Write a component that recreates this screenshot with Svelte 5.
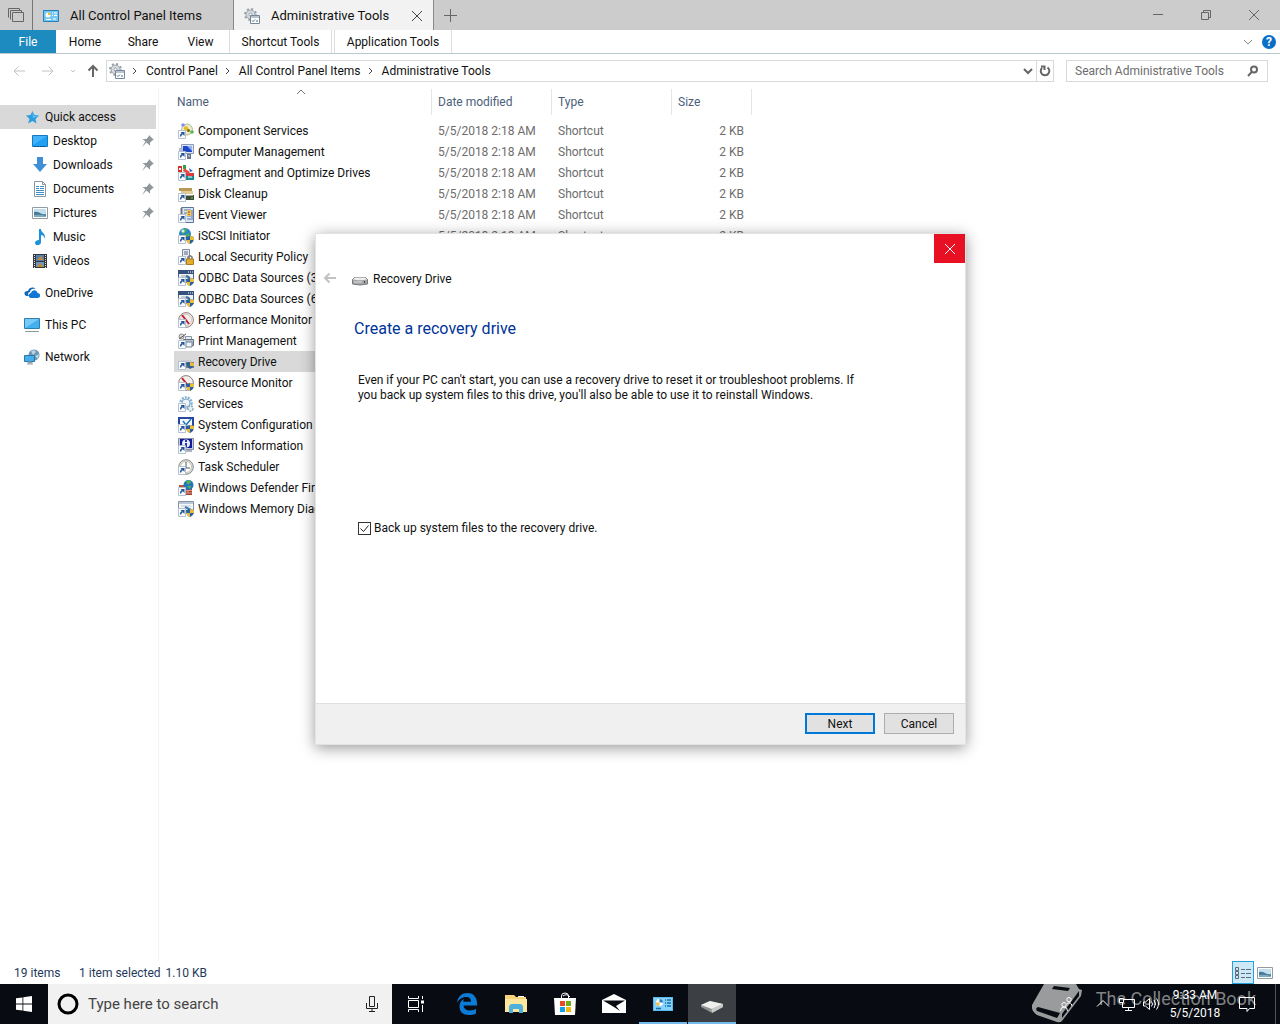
<script>
  let backup = $state(true);
  let selected = $state('Recovery Drive');

  // overlays shared by the shortcut icons
  const arrow =
    '<path d="M.5 7.5h7v8h-7z" fill="#fff" stroke="#b4c1d0"/><path d="M2.500 13.500q0-2 2-3" fill="none" stroke="#24539c" stroke-width="1.5"/><path d="M2.500 9H6.500v4z" fill="#24539c"/>';
  const shield =
    '<path d="M12 8l4 1c0 4-1 5.5-4 7-3-1.5-4-3-4-7z" fill="#2c5f9e"/><path d="M12 8l4 1v3h-4zM8 12h4v4q-3-1-4-4z" fill="#e8bd3c"/>';

  const icons = {
    component:
      '<circle cx="9" cy="6.5" r="5.5" fill="#e9ecc8" stroke="#b8bd92"/><circle cx="5" cy="2" r="1.8" fill="#8c8cf0"/><circle cx="8" cy="5.5" r="2.2" fill="#e8b828"/><circle cx="10.5" cy="7.5" r="1.5" fill="#7a6512"/><circle cx="14" cy="9" r="1.8" fill="#59b559"/>' + arrow,
    computer:
      '<path d="M3.5.5h12v9h-12z" fill="#dde4ef" stroke="#8b9bb8"/><path d="M5 2h9v6H5z" fill="#1d46c8"/><path d="M9 2h5v5z" fill="#8fb2f4"/><path d="M1 4h4v5H1z" fill="#aebbd0"/><path d="M9 10h4v5H9z" fill="#65758f"/><path d="M10 12h2" stroke="#dce4ef"/>' + arrow,
    defrag:
      '<path d="M0 1h4v6H0z" fill="#d92f2f"/><path d="M1 3h2v2H1z" fill="#fff"/><path d="M5 0h3v4H5z" fill="#28a050"/><path d="M6 3l6 4-2 2-5-3z" fill="#e34b3c"/><path d="M11 3l4 3-3 1z" fill="#3867c8"/><path d="M8 9h8v6H8z" fill="#1b8a91"/><path d="M8 8h8v3H8z" fill="#d93c40"/><path d="M10 12h4" stroke="#fff"/>' + arrow,
    cleanup:
      '<path d="M1 2h13v3H1z" fill="#b99a54"/><path d="M3 5h12v3H3z" fill="#e0cc94"/><path d="M7 9h9v5H7z" fill="#424a3c"/><path d="M8 9h7v1H8z" fill="#a5aa98"/><path d="M13 12h2" stroke="#5fe05f"/>' + arrow,
    event:
      '<path d="M3.5.5h12v15h-12z" fill="#dbe7f5" stroke="#5d7599"/><path d="M6 3h7M6 6h7M9 9h4M9 12h4" stroke="#4b72b5"/><path d="M2 2h3M2 4h3M2 6h3" stroke="#777"/><path d="M9 3h4v6H9z" fill="#f4c63a"/><path d="M11 4v2M11 7v1" stroke="#b03020"/><path d="M13 3h2v10h-2z" fill="#9aabc3"/>' + arrow,
    iscsi:
      '<circle cx="7" cy="6" r="6" fill="#2b83c9"/><path d="M3 2q4-3 6 0l-2 3-3 1zM7 7l4-2 1 4-4 3z" fill="#52b04f"/><circle cx="5" cy="3" r="1.5" fill="#d7f0ff"/>' + arrow + shield,
    policy:
      '<path d="M4.5.5h7v10h-7z" fill="#e9edf2" stroke="#7a8ba1"/><path d="M6 3h4M6 5h4" stroke="#526780"/><path d="M10 10V8q2-2.5 4 0v2" fill="none" stroke="#777" stroke-width="1.5"/><path d="M8.5 10h7v5.5h-7z" fill="#e2ae32" stroke="#ae7b18"/>' + arrow,
    odbc:
      '<path d="M.5.5h15v12H.5z" fill="#eef2f6" stroke="#4c658b"/><path d="M0 0h16v4H0z" fill="#36517c"/><path d="M10 2h1M12 2h1M14 2h1" stroke="#fff"/><path d="M3 6h8" stroke="#9aa7b6"/><path d="M8 6l4 2" stroke="#3d6d9c" stroke-width="2"/>' + arrow + shield,
    perf:
      '<circle cx="8" cy="8" r="7.4" fill="#f2efeb" stroke="#8e7d7b"/><circle cx="8" cy="8" r="5.6" fill="none" stroke="#d9c7c5"/><path d="M4 3l7 9" stroke="#c41f2f" stroke-width="2"/>' + arrow,
    print:
      '<path d="M7.5 3.5h6v5h-6z" fill="#e8edf2" stroke="#8795a4"/><path d="M5.5 6.5h10v6h-10z" fill="#b7c0ca" stroke="#657485"/><path d="M8 9h6v5H8z" fill="#eef4fb" stroke="#718499"/><circle cx="3.5" cy="3.5" r="2.5" fill="#ddd" stroke="#888"/><path d="M1 6l7-5" stroke="#555"/>' + arrow,
    recovery:
      '<path d="M2 8l2-2h9l3 3v3H2z" fill="#c9ccd0"/>' + arrow + '<path d="M8 8h8v6H8z" fill="#777d82"/><path d="M12 8l4 1q0 4-4 6-3-2-4-6z" fill="#2c5f9e"/><path d="M12 8l4 1v3h-4z" fill="#e8bd3c"/>',
    resource:
      '<circle cx="8" cy="8" r="7.4" fill="#f2efeb" stroke="#8e7d7b"/><path d="M4 3l7 9" stroke="#c41f2f" stroke-width="2"/>' + arrow + shield,
    services:
      '<circle cx="8" cy="7" r="5.5" fill="none" stroke="#86b3d4" stroke-width="2.5" stroke-dasharray="2 1"/><circle cx="8" cy="7" r="4" fill="#edf5fa" stroke="#86a9c4"/><circle cx="12.5" cy="12.5" r="2.5" fill="#e8f0f7" stroke="#8ca6bb" stroke-width="1.5" stroke-dasharray="2 1"/>' + arrow,
    config:
      '<path d="M1 1h14v10H1z" fill="#f5faff" stroke="#2847a0" stroke-width="2"/><path d="M5 4l3 4 5-6" fill="none" stroke="#2377bd" stroke-width="1.5"/>' + arrow + shield,
    info:
      '<path d="M.5.5h15v11H.5z" fill="#c5cbdc" stroke="#8590a8"/><path d="M2 1h12v9H2z" fill="#101c98"/><circle cx="8" cy="5.5" r="4" fill="#e9edff"/><path d="M8 2v2M8 5v4" stroke="#2336b3" stroke-width="2"/><path d="M8 12h6v2H8z" fill="#aeb4c2"/>' + arrow,
    task:
      '<circle cx="8" cy="8" r="7.3" fill="#dfe2e4" stroke="#82898e"/><circle cx="8" cy="8" r="5.5" fill="#fff" stroke="#c9c3a2"/><path d="M8 3v6h4" fill="none" stroke="#475a6e"/>' + arrow,
    firewall:
      '<path d="M6 7h8v8H6z" fill="#a6402c"/><path d="M6 10.5h8M6 13h8M10 11v2" stroke="#dda08e"/><path d="M1 5h6v5H1z" fill="#bb5137"/><path d="M1 7.5h6" stroke="#dda08e"/><circle cx="10.5" cy="5" r="5" fill="#2376bd"/><path d="M8 1q4-2 5 1l-3 3zM9 6h4l-1 3z" fill="#56b64f"/>' + arrow,
    memory:
      '<path d="M.5.5h15v12H.5z" fill="#f4f7fa" stroke="#8794a7"/><path d="M1 1h14v2H1z" fill="#b9c7db"/><path d="M3 5h10" stroke="#bac4cf"/><path d="M7 6l6 3" stroke="#3b78b5" stroke-width="2"/>' + arrow + shield,
    star: '<path d="M8.5 2l2 4 4.5.5-3.500 3.500 1 4.500L8.500 12l-4.500 2.500L5.500 10 2 6.500l4.500-.5z" fill="#2d9de0"/><path d="M8.500 2L10 7l5-.5L9 9z" fill="#66c0f5"/>',
    desktop: '<path d="M.5 2.5h15v11H.5z" fill="#20a0f2" stroke="#147bc0"/><path d="M1 3h14L1 12z" fill="#42b3fb"/><path d="M2 13.5h12" stroke="#0b4f86" stroke-dasharray="2 1"/>',
    downloads: '<path d="M5 0h6v7h4l-7 8-7-8h4z" fill="#3f8fd6"/>',
    documents: '<path d="M2.5.5h8l3 3v12h-11z" fill="#fff" stroke="#8b959e"/><path d="M10.5.5v3h3" fill="none" stroke="#8b959e"/><path d="M4 5.5h3M4 7.5h3M8 5.5h4M8 7.5h4M4 9.5h8M4 11.5h8M4 13.5h8" stroke="#3f8fc9"/>',
    pictures: '<path d="M.5 2.5h15v11H.5z" fill="#fff" stroke="#939ba1"/><path d="M2 4h12v8H2z" fill="#c2dff0"/><path d="M2 7q3-1 6 1t6 1v3H2z" fill="#48799a"/><path d="M2 10q6-1 12 1v1H2z" fill="#7fa9bd"/>',
    music: '<path d="M7 0h2c0 4 5 4 4 10-1-3-2-4-4-4v7c0 4-6 4-6 1 0-2 2-3 4-3z" fill="#1b91dc"/>',
    videos: '<path d="M1 1h14v14H1z" fill="#34383e"/><path d="M2.5 2v13M13.5 2v13" stroke="#e2e2e2" stroke-dasharray="1 1"/><path d="M4 2h8v6H4z" fill="#547fae"/><path d="M4 9h8v5H4z" fill="#7294bd"/><path d="M5 7l4-4 3 4zM5 14l3-4 4 4z" fill="#bf8b39"/>',
    onedrive: '<path d="M5 11H3C-1 10 0 5.5 4 6c1-4 6-4.5 7.5-2C8 3 6 5 6 7 4 7 3.5 9.5 5 11z" fill="#1266b5"/><path d="M7 13c-3 0-3-4.5 0-5 1-4 6-3.5 6.5 0 3.5 0 3.5 5 0 5z" fill="#0f78d4"/>',
    pc: '<path d="M.5 1.5h15v10H.5z" fill="#42b0ed" stroke="#327eab"/><path d="M1 2h14L1 11z" fill="#76caf7"/><path d="M1 14.5h14" stroke="#929da6"/>',
    network: '<circle cx="10" cy="6" r="5.5" fill="#6f95b0"/><path d="M7 2q4-2 5 1l-3 3zM11 7l4-2-1 5z" fill="#b8d3e3"/><path d="M.5 6.5h10v6H.5z" fill="#44adeb" stroke="#2c75a6"/><path d="M4 13h4v1H4zM3 15h6" fill="#8ba0af" stroke="#8ba0af"/>',
    panel: '<path d="M.5 2.5h15v11H.5z" fill="#72c7f5" stroke="#2580b8"/><circle cx="5" cy="7" r="2.5" fill="#fff"/><path d="M5 4.5A2.5 2.5 0 0 1 7.5 7H5z" fill="#f1b936"/><path d="M9 5h1M11 5h3M9 7.5h1M11 7.5h3M3 11.5h5M10 11h3" stroke="#fff"/>',
    tools: '<circle cx="6.5" cy="6.5" r="5.5" fill="none" stroke="#98a1a9" stroke-width="2" stroke-dasharray="2 2.32"/><circle cx="6.5" cy="6.5" r="4.5" fill="#d5dade" stroke="#98a1a9"/><circle cx="6.5" cy="6.5" r="1.5" fill="#fff" stroke="#98a1a9"/><path d="M6.5 7.5h9v8h-9z" fill="#fff" stroke="#75879a"/><path d="M7 9h8" stroke="#75879a"/><path d="M8 12.5l1 1 2-2M12 13h2" fill="none" stroke="#4b6989"/>',
    drive: '<path d="M.5 8.5l2-2h11l2 2V13q-7.5 2-15 0z" fill="#a5a7a9" stroke="#77797b"/><path d="M1 8.5l2-2h10l2 2q-7 1.5-14 0z" fill="#eceded"/><path d="M2 11h8" stroke="#d9dadb"/><path d="M12.5 10v2" stroke="#444"/>',
    pin: '<path d="M9 2l5 5-1.5.3L10 9.800v3L6.500 9.500 2 14l3.500-5.500L2.500 6h3.800l2.400-2.500z" fill="#8f979d"/>'
  };

  const quickItems = [
    { name: 'Desktop', icon: 'desktop', pinned: true },
    { name: 'Downloads', icon: 'downloads', pinned: true },
    { name: 'Documents', icon: 'documents', pinned: true },
    { name: 'Pictures', icon: 'pictures', pinned: true },
    { name: 'Music', icon: 'music' },
    { name: 'Videos', icon: 'videos' }
  ];

  const places = [
    { name: 'OneDrive', icon: 'onedrive' },
    { name: 'This PC', icon: 'pc' },
    { name: 'Network', icon: 'network' }
  ];

  const crumbs = ['Control Panel', 'All Control Panel Items', 'Administrative Tools'];

  const files = [
    ['Component Services', 'component'],
    ['Computer Management', 'computer'],
    ['Defragment and Optimize Drives', 'defrag'],
    ['Disk Cleanup', 'cleanup'],
    ['Event Viewer', 'event'],
    ['iSCSI Initiator', 'iscsi'],
    ['Local Security Policy', 'policy'],
    ['ODBC Data Sources (32-bit)', 'odbc'],
    ['ODBC Data Sources (64-bit)', 'odbc'],
    ['Performance Monitor', 'perf'],
    ['Print Management', 'print'],
    ['Recovery Drive', 'recovery'],
    ['Resource Monitor', 'resource'],
    ['Services', 'services'],
    ['System Configuration', 'config'],
    ['System Information', 'info'],
    ['Task Scheduler', 'task'],
    ['Windows Defender Firewall', 'firewall'],
    ['Windows Memory Diagnostic', 'memory']
  ];
</script>

{#snippet icon(name)}
  <svg class="icon" width="16" height="16" viewBox="0 0 16 16" aria-hidden="true">{@html icons[name]}</svg>
{/snippet}

{#snippet stroke(d, w = 1, size = 16)}
  <svg class="icon" width={size} height={size} viewBox="0 0 {size} {size}" fill="none" stroke="currentColor" stroke-width={w} aria-hidden="true"><path {d} /></svg>
{/snippet}

<div class="desktop">
  <header class="tabbar">
    <button class="sets" aria-label="Previous tabs">{@render stroke('M.5 10.5v-9h11v2M2.5 12.5v-9h11v2M4.5 5.5h11v9h-11z')}</button>
    <button class="tab">{@render icon('panel')}<span>All Control Panel Items</span></button>
    <div class="tab active">
      {@render icon('tools')}<span>Administrative Tools</span>
      <button class="tab-close" aria-label="Close tab">{@render stroke('M3 3l10 10M13 3L3 13')}</button>
    </div>
    <button class="new-tab" aria-label="New tab">{@render stroke('M8.5 2v13M2 8.5h13')}</button>
    <div class="controls">
      <button aria-label="Minimize">{@render stroke('M3 7.5h10')}</button>
      <button aria-label="Restore">{@render stroke('M3.5 5.5h7v7h-7zM5.5 5.5v-2h7v7h-2')}</button>
      <button aria-label="Close">{@render stroke('M3 3l10 10M13 3L3 13')}</button>
    </div>
  </header>

  <nav class="ribbon">
    <button class="file">File</button>
    <button>Home</button>
    <button>Share</button>
    <button class="view">View</button>
    <button class="context">Shortcut Tools</button>
    <button class="context wide">Application Tools</button>
    <div class="ribbon-end">
      <button class="expand" aria-label="Expand the ribbon">{@render stroke('M4 6l4 4 4-4')}</button>
      <button class="help" aria-label="Help">?</button>
    </div>
  </nav>

  <div class="address-row">
    <div class="nav-buttons">
      <button class="dim" aria-label="Back">{@render stroke('M14 8H3M7.5 3.5L3 8l4.5 4.5')}</button>
      <button class="dim" aria-label="Forward">{@render stroke('M2 8h11M8.5 3.5L13 8l-4.5 4.5')}</button>
      <button class="dim" aria-label="Recent locations">{@render stroke('M2 3l2 2 2-2', 1, 8)}</button>
      <button class="up" aria-label="Up">{@render stroke('M8 14V3M3.5 7.5L8 3l4.5 4.5', 2)}</button>
    </div>
    <div class="address">
      {@render icon('tools')}
      {#each crumbs as crumb}
        <span class="chevron">{@render stroke('M2 1l3 3-3 3', 1, 8)}</span>
        <button class="crumb">{crumb}</button>
      {/each}
      <button class="history" aria-label="Previous locations">{@render stroke('M4 6l4 4 4-4', 2)}</button>
      <button class="refresh" aria-label="Refresh">{@render stroke('M10.5 4.5A4.3 4.3 0 1 1 5 5M4 3.5h3.5V7', 2)}</button>
    </div>
    <div class="search">
      <input type="text" placeholder="Search Administrative Tools" aria-label="Search Administrative Tools" />
      {@render stroke('M9 3.5a3 3 0 1 1 0 6a3 3 0 1 1 0-6M6.8 8.8L3 13', 2)}
    </div>
  </div>

  <div class="content">
    <aside>
      <a class="place current" href="#quick">{@render icon('star')}<span>Quick access</span></a>
      {#each quickItems as item}
        <a class="place child" href="#{item.icon}">
          {@render icon(item.icon)}<span>{item.name}</span>
          {#if item.pinned}<i class="pin">{@render icon('pin')}</i>{/if}
        </a>
      {/each}
      {#each places as item}
        <a class="place root" href="#{item.icon}">{@render icon(item.icon)}<span>{item.name}</span></a>
      {/each}
    </aside>

    <main>
      <table>
        <thead>
          <tr>
            <th class="name" aria-sort="ascending"><div>Name <i class="sort">{@render stroke('M1 6l4-4 4 4', 1, 10)}</i></div></th>
            <th><div>Date modified</div></th>
            <th><div>Type</div></th>
            <th class="size"><div>Size</div></th>
          </tr>
        </thead>
        <tbody>
          {#each files as [name, glyph]}
            <tr class:selected={name === selected} onclick={() => (selected = name)}>
              <td><div class="file-name">{@render icon(glyph)}<span>{name}</span></div></td>
              <td>5/5/2018 2:18 AM</td>
              <td>Shortcut</td>
              <td class="kb">2 KB</td>
            </tr>
          {/each}
        </tbody>
      </table>
    </main>
  </div>

  <footer class="status">
    <span class="count">{files.length} items</span>
    <span>1 item selected</span>
    <span>1.10 KB</span>
    <div class="views">
      <button class="on" aria-label="Details view">
        <svg width="20" height="20" viewBox="0 0 20 20" fill="none" stroke="#5b6b78" aria-hidden="true"><path d="M2.5 4.5h3v3h-3zM2.5 8.5h3v3h-3zM2.5 12.5h3v3h-3zM8 6.5h4M13 6.5h5M8 10.5h4M13 10.5h5M8 14.5h4M13 14.5h5" /></svg>
      </button>
      <button aria-label="Large icons view">{@render icon('pictures')}</button>
    </div>
  </footer>

  <div class="taskbar">
    <button class="start" aria-label="Start">
      <svg width="16" height="16" viewBox="0 0 16 16" fill="#fff" aria-hidden="true"><path d="M0 2.3L6.5 1.4v6.2H0zM7.3 1.3L16 0v7.6H7.3zM0 8.4h6.5v6.2L0 13.7zM7.3 8.4H16V16l-8.7-1.3z" /></svg>
    </button>
    <label class="cortana">
      <svg width="24" height="24" viewBox="0 0 24 24" fill="none" stroke="#000" stroke-width="3" aria-hidden="true"><circle cx="12" cy="12" r="9" /></svg>
      <input type="text" placeholder="Type here to search" aria-label="Type here to search" />
      <svg width="16" height="20" viewBox="0 0 16 20" fill="none" stroke="#222" aria-hidden="true"><path d="M5.5 2.5h5v10h-5zM2.5 9v5.5h11V9M8 14.5V18M5 17.5h6" /></svg>
    </label>
    <button class="task-view" aria-label="Task View">
      <svg width="18" height="18" viewBox="0 0 18 18" fill="none" stroke="#fff" aria-hidden="true"><path d="M1.5 1v2.5h10V1M1.5 5.5h10v7h-10zM1.5 17v-2.5h10V17M15.5 1v3M15.5 10v7" /><path d="M14 5.5h3v3h-3z" fill="#fff" stroke="none" /></svg>
    </button>
    <button class="app" aria-label="Microsoft Edge">
      <svg width="24" height="24" viewBox="0 0 24 24" fill="#0b7bd8" aria-hidden="true"><path d="M2 11C3 4 7 1 12.5 1 19 1 22 6 22 11v2.5H8.5c.3 3.5 3 5 6.500 5 2.300 0 4.300-.7 6-1.700v4.700c-2 1-4.300 1.500-7 1.500-6 0-9.500-3.500-9.500-8.500C4.500 11 6 8.300 9 7c-.4.7-.7 1.700-.8 2.800H16C16 7 14.500 5 11 5 7 5 3.800 7.500 2 11z" /></svg>
    </button>
    <button class="app" aria-label="File Explorer">
      <svg width="24" height="24" viewBox="0 0 24 24" aria-hidden="true"><path d="M1 3h9l2 2h10v15H1z" fill="#f6d57a" /><path d="M1 7h22v13H1z" fill="#fde79c" /><path d="M14 4.5h6" stroke="#fff" /><path d="M5 21v-7l2-2h10l2 2v7h-4v-4H9v4z" fill="#4fb0dd" /></svg>
    </button>
    <button class="app" aria-label="Microsoft Store">
      <svg width="24" height="24" viewBox="0 0 24 24" aria-hidden="true"><path d="M8.5 7V4q0-3 3.5-3t3.5 3v3M10 4q4-3 7 1" fill="none" stroke="#fff" /><path d="M1 6h22l-1 17H2z" fill="#fff" /><path d="M7 9h5v5H7z" fill="#e84b25" /><path d="M13 9h5v5h-5z" fill="#75ad16" /><path d="M7 15h5v5H7z" fill="#17a1e5" /><path d="M13 15h5v5h-5z" fill="#f5b80b" /></svg>
    </button>
    <button class="app" aria-label="Mail">
      <svg width="24" height="24" viewBox="0 0 24 24" aria-hidden="true"><path d="M0 8l12-6 12 6v13H0z" fill="#fff" /><path d="M1 8.5h22L14 14l4 5-6-4z" fill="#080c12" /></svg>
    </button>
    <button class="app running" aria-label="Control Panel">
      <svg width="24" height="24" viewBox="0 0 24 24" aria-hidden="true"><path d="M2 5h20v14H2z" fill="#59b8ed" /><path d="M3 6h18v12H3z" fill="#85d2fa" /><circle cx="8.5" cy="10.5" r="3.5" fill="#fff" /><path d="M8.5 7A3.5 3.5 0 0 1 12 10.5H8.5z" fill="#287eb8" /><path d="M8.5 10.5V14A3.5 3.5 0 0 1 5 10.5z" fill="#f0be42" /><path d="M14 8h1M16 8h4M14 11h1M16 11h4M14 14h1M16 14h4M5 16.5h5" stroke="#1670a8" stroke-width="1.5" /></svg>
    </button>
    <button class="app running focused" aria-label="Recovery Drive">
      <svg width="24" height="24" viewBox="0 0 24 24" aria-hidden="true"><path d="M1 13l9-4 13 3v3l-11 6-11-6z" fill="#8e9090" /><path d="M1 13l9-4 13 3-11 5z" fill="#efefed" /><path d="M12 17l11-5v3l-11 6z" fill="#c9cac7" /><path d="M10 18l2 1" stroke="#a5c898" /></svg>
    </button>

    <div class="tray">
      <button aria-label="People">{@render stroke('M10 1.5a2.2 2.2 0 1 1 0 4.4a2.2 2.2 0 1 1 0-4.4M5 6.5a2.2 2.2 0 1 1 0 4.4a2.2 2.2 0 1 1 0-4.4M8 8q4-3 5 2M1.5 15q0-4 3.5-4t3.5 4')}</button>
      <button aria-label="Show hidden icons">{@render stroke('M2 10.5l6-6 6 6')}</button>
      <button aria-label="Network">{@render stroke('M5 3.5h10.5v8h-12V7M.5 2.5h4v4h-4zM9.5 12v2.5M6 14.5h7')}</button>
      <button aria-label="Volume">{@render stroke('M.5 6h2l4-3.5v11L2.5 10h-2zM8.5 5.5q2 2.5 0 5M11 4q3 4 0 8M13.5 2.5q4 5.5 0 11')}</button>
      <button class="clock"><span>9:33 AM</span><span>5/5/2018</span></button>
      <button class="actions" aria-label="Action Center">{@render stroke('M.5 1.5h15v11h-5L8 15.5v-3H.5z')}</button>
      <button class="peek" aria-label="Show desktop"></button>
    </div>
    <div class="watermark">
      <svg width="52" height="40" viewBox="0 0 52 40" aria-hidden="true"><path d="M12 0h32l3 5 3 1-1 6-19 25q-2 2-5 1L5 31q-6-4-5-10z" fill="#999b9d" /><path d="M6 23q-3 1-1 4l20 7 3-5z" fill="#080c12" /><path d="M30 30L47 7v5L30 34z" fill="#080c12" /><path d="M22 2l16 2-2 3-16-2z" fill="#080c12" /></svg>
      <span>The Collection Book</span>
    </div>
  </div>

  <div class="dialog" role="dialog" aria-labelledby="dialog-title">
    <div class="dialog-top"><button class="dialog-close" aria-label="Close">{@render stroke('M3 3l10 10M13 3L3 13')}</button></div>
    <div class="dialog-title">
      <button class="dim" aria-label="Back">{@render stroke('M14 7H3M7.5 2.5L3 7l4.5 4.5', 2)}</button>
      {@render icon('drive')}
      <span id="dialog-title">Recovery Drive</span>
    </div>
    <h1>Create a recovery drive</h1>
    <p>Even if your PC can't start, you can use a recovery drive to reset it or troubleshoot problems. If<br />you back up system files to this drive, you'll also be able to use it to reinstall Windows.</p>
    <label class="backup">
      <input type="checkbox" bind:checked={backup} />
      <span>Back up system files to the recovery drive.</span>
    </label>
    <div class="dialog-footer">
      <button class="default">Next</button>
      <button>Cancel</button>
    </div>
  </div>
</div>

<style>
  :global(body) {
    margin: 0;
  }

  .desktop {
    position: relative;
    display: flex;
    flex-direction: column;
    height: 100vh;
    overflow: hidden;
    background: #fff;
    color: #111;
    font: 12px/16px Roboto, 'Noto Sans', sans-serif;
  }

  .desktop * {
    box-sizing: border-box;
  }

  button,
  input {
    margin: 0;
    padding: 0;
    border: 0;
    background: none;
    color: inherit;
    font: inherit;
  }

  button {
    display: flex;
    align-items: center;
    justify-content: center;
    white-space: nowrap;
  }

  input {
    min-width: 0;
    outline: none;
  }

  input::placeholder {
    color: #6d6d6d;
    opacity: 1;
  }

  .icon {
    display: block;
    flex: none;
  }

  /* tabs */
  .tabbar {
    display: flex;
    flex: none;
    height: 30px;
    background: #ccc;
    font-size: 13px;
  }

  .sets {
    width: 33px;
    border-right: 1px solid #777;
    color: #666;
  }

  .tab {
    display: flex;
    align-items: center;
    justify-content: flex-start;
    gap: 11px;
    width: 201px;
    padding: 1px 0 0 10px;
    border-right: 1px solid #888;
  }

  .tab.active {
    width: 200px;
    background: #f2f2f2;
  }

  .tab-close {
    margin: 0 8px 0 auto;
    color: #444;
  }

  .new-tab {
    width: 32px;
    color: #666;
  }

  .controls {
    display: flex;
    margin-left: auto;
    padding-right: 2px;
    color: #666;
  }

  .controls button {
    width: 48px;
  }

  /* ribbon */
  .ribbon {
    display: flex;
    flex: none;
    height: 24px;
    border-bottom: 1px solid #b9c8ce;
  }

  .ribbon > button {
    width: 58px;
  }

  .ribbon > .file {
    width: 56px;
    background: #1e8bc0;
    color: #fff;
  }

  .ribbon > .view {
    width: 57px;
  }

  .ribbon > .context {
    width: 103px;
    border-right: 1px solid #ddd;
    border-left: 1px solid #ddd;
  }

  .ribbon > .wide {
    width: 118px;
    margin-left: 2px;
  }

  .ribbon-end {
    display: flex;
    align-items: center;
    gap: 6px;
    margin-left: auto;
    padding-right: 4px;
  }

  .expand {
    color: #888;
  }

  .help {
    width: 14px;
    height: 14px;
    border-radius: 50%;
    background: #0a6fc7;
    color: #fff;
    font-weight: 700;
  }

  /* address */
  .address-row {
    display: flex;
    flex: none;
    align-items: center;
    height: 34px;
    padding-right: 12px;
  }

  .nav-buttons {
    display: flex;
    align-items: center;
    width: 106px;
    padding-left: 11px;
    gap: 13px;
  }

  .dim {
    color: #c2c2c2;
  }

  .nav-buttons .up {
    margin-left: -5px;
    color: #666;
  }

  .address,
  .search {
    display: flex;
    align-items: center;
    height: 22px;
    border: 1px solid #d9d9d9;
  }

  .address {
    flex: 1;
    padding-left: 2px;
  }

  .chevron {
    margin: 0 7px 0 6px;
    color: #444;
  }

  .history {
    width: 16px;
    margin-left: auto;
    color: #666;
  }

  .refresh {
    width: 17px;
    height: 20px;
    border-left: 1px solid #d9d9d9;
    color: #666;
  }

  .search {
    width: 202px;
    margin-left: 12px;
    padding: 0 6px 0 8px;
    color: #666;
  }

  .search input {
    flex: 1;
  }

  /* explorer body */
  .content {
    display: flex;
    flex: 1;
    min-height: 0;
  }

  aside {
    flex: none;
    width: 159px;
    padding: 17px 2px 0 0;
    border-right: 1px solid #f3f3f3;
  }

  .place {
    display: flex;
    align-items: center;
    gap: 5px;
    height: 24px;
    padding-left: 24px;
    color: inherit;
    text-decoration: none;
  }

  .place.current {
    background: #d9d9d9;
  }

  .place.child {
    padding-left: 32px;
  }

  .place.root {
    margin-top: 8px;
  }

  .pin {
    margin-left: auto;
  }

  main {
    flex: 1;
    min-width: 0;
    padding-left: 15px;
  }

  table {
    width: 578px;
    border-collapse: collapse;
    table-layout: fixed;
  }

  th {
    width: 120px;
    height: 32px;
    padding: 1px 0 5px;
    color: #4c607a;
    font-weight: 400;
    text-align: left;
  }

  th div {
    position: relative;
    height: 26px;
    padding: 5px 6px;
    border-right: 1px solid #e5e5e5;
  }

  th.name {
    width: 258px;
  }

  th.name div {
    padding-left: 3px;
  }

  th.size {
    width: 80px;
  }

  .sort {
    position: absolute;
    top: -1px;
    left: 122px;
    color: #777;
  }

  td {
    height: 21px;
    padding: 0 6px;
    color: #6d6d6d;
    white-space: nowrap;
  }

  td:first-child {
    padding: 0 4px;
    color: #111;
  }

  .kb {
    padding-right: 8px;
    text-align: right;
  }

  tr.selected {
    background: #d9d9d9;
  }

  .file-name {
    display: flex;
    align-items: center;
    gap: 4px;
  }

  .status {
    display: flex;
    flex: none;
    align-items: center;
    gap: 5px;
    height: 23px;
    padding-left: 14px;
    color: #1e395b;
  }

  .count {
    width: 60px;
  }

  .views {
    display: flex;
    align-self: stretch;
    margin-left: auto;
    padding-right: 4px;
  }

  .views button {
    width: 22px;
  }

  .views .on {
    border: 1px solid #26a0da;
    background: #cde8f6;
  }

  /* taskbar */
  .taskbar {
    position: relative;
    display: flex;
    flex: none;
    height: 40px;
    background: #080c12;
    color: #fff;
  }

  .start,
  .task-view {
    width: 48px;
  }

  .task-view {
    margin-right: 2px;
  }

  .cortana {
    display: flex;
    align-items: center;
    gap: 8px;
    width: 344px;
    padding: 0 12px 0 8px;
    background: #f1f1f1;
    color: #333;
    font-size: 15px;
  }

  .cortana input {
    flex: 1;
  }

  .cortana input::placeholder {
    color: #444;
  }

  .app {
    width: 48px;
    margin-left: 1px;
  }

  .running {
    box-shadow: inset 0 -2px #76b9ed;
  }

  .focused {
    background: #3c4045;
  }

  .tray {
    position: relative;
    z-index: 1;
    display: flex;
    margin-left: auto;
  }

  .tray button {
    width: 24px;
  }

  .tray button:first-child {
    margin-right: 12px;
  }

  .tray .clock {
    flex-direction: column;
    width: 64px;
  }

  .tray .clock span {
    line-height: 18px;
  }

  .tray .actions {
    width: 40px;
  }

  .tray .peek {
    width: 5px;
    margin-left: 8px;
    border-left: 1px solid #555;
  }

  .watermark {
    position: absolute;
    top: 0;
    right: 24px;
    display: flex;
    gap: 12px;
    color: #808285;
    font-size: 18px;
    line-height: 30px;
    white-space: nowrap;
  }

  /* wizard window */
  .dialog {
    position: absolute;
    top: 233px;
    left: calc(50% - 325px);
    display: flex;
    flex-direction: column;
    width: 651px;
    height: 512px;
    border: 1px solid #e3e3e3;
    background: #fff;
    box-shadow: 0 3px 14px rgba(0, 0, 0, 0.4);
  }

  .dialog-top {
    display: flex;
    justify-content: flex-end;
    height: 29px;
  }

  .dialog-close {
    width: 31px;
    background: #e81123;
    color: #fff;
  }

  .dialog-title {
    display: flex;
    align-items: center;
    gap: 5px;
    height: 32px;
    padding-left: 6px;
  }

  .dialog-title button {
    margin-right: 9px;
  }

  h1 {
    margin: 22px 0 0 38px;
    color: #003399;
    font-size: 16px;
    font-weight: 400;
    line-height: 24px;
  }

  p {
    margin: 32px 0 0 42px;
    line-height: 15px;
    white-space: nowrap;
  }

  .backup {
    display: flex;
    align-items: center;
    gap: 3px;
    margin: 117px 0 0 42px;
  }

  .backup input {
    width: 13px;
    height: 13px;
    border: 1px solid #333;
    background: #fff;
    appearance: none;
  }

  .backup input:checked {
    background: #fff url("data:image/svg+xml,%3Csvg xmlns='http://www.w3.org/2000/svg' viewBox='0 0 11 11'%3E%3Cpath d='M1.5 5.5l3 3 5-6' fill='none' stroke='%23222'/%3E%3C/svg%3E");
  }

  .dialog-footer {
    display: flex;
    justify-content: flex-end;
    gap: 9px;
    height: 41px;
    margin-top: auto;
    padding: 9px 11px;
    border-top: 1px solid #dfdfdf;
    background: #f0f0f0;
  }

  .dialog-footer button {
    width: 70px;
    height: 21px;
    border: 1px solid #adadad;
    background: #e1e1e1;
  }

  .dialog-footer .default {
    border: 2px solid #0078d7;
  }
</style>
